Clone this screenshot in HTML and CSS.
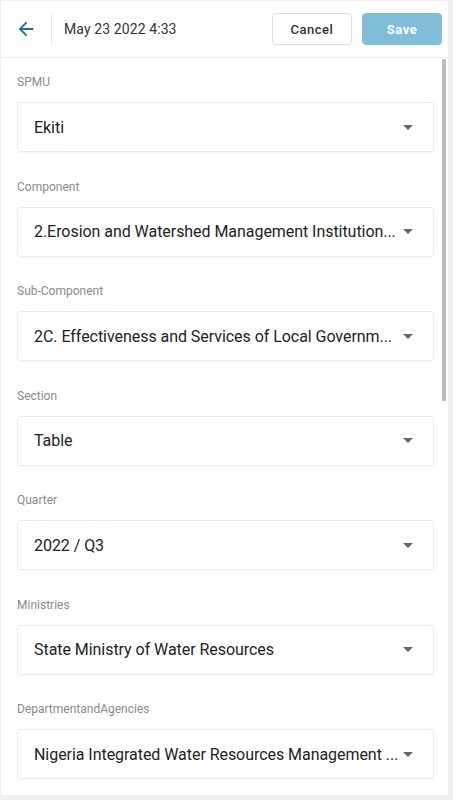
FILE: index.html
```html
<!DOCTYPE html>
<html>
<head>
<meta charset="utf-8">
<link rel="stylesheet" href="styles.css">
</head>
<body>
<div class="app">
  <header class="topbar">
    <div class="back">
      <svg viewBox="0 0 24 24" width="22" height="22"><path d="M20 11H7.83l5.59-5.59L12 4l-8 8 8 8 1.41-1.41L7.83 13H20v-2z" fill="#1d6f8c"/></svg>
    </div>
    <div class="divider"></div>
    <div class="date">May 23 2022 4:33</div>
    <div class="actions">
      <button class="btn btn-cancel">Cancel</button>
      <button class="btn btn-save">Save</button>
    </div>
  </header>
  <main class="content">
    <div class="form">
      <div class="field">
        <div class="label">SPMU</div>
        <div class="select"><span class="value">Ekiti</span><span class="caret"></span></div>
      </div>
      <div class="field">
        <div class="label">Component</div>
        <div class="select"><span class="value">2.Erosion and Watershed Management Institution...</span><span class="caret"></span></div>
      </div>
      <div class="field">
        <div class="label">Sub-Component</div>
        <div class="select"><span class="value">2C. Effectiveness and Services of Local Governm...</span><span class="caret"></span></div>
      </div>
      <div class="field">
        <div class="label">Section</div>
        <div class="select"><span class="value">Table</span><span class="caret"></span></div>
      </div>
      <div class="field">
        <div class="label">Quarter</div>
        <div class="select"><span class="value">2022 / Q3</span><span class="caret"></span></div>
      </div>
      <div class="field">
        <div class="label">Ministries</div>
        <div class="select"><span class="value">State Ministry of Water Resources</span><span class="caret"></span></div>
      </div>
      <div class="field">
        <div class="label">DepartmentandAgencies</div>
        <div class="select"><span class="value">Nigeria Integrated Water Resources Management ...</span><span class="caret"></span></div>
      </div>
    </div>
    <div class="scroll-thumb"></div>
  </main>
</div>
</body>
</html>
```
FILE: styles.css
```css
html, body {
  margin: 0;
  padding: 0;
}
body {
  background: #efefef;
  font-family: Roboto, "Liberation Sans", sans-serif;
  width: 453px;
  height: 800px;
  overflow: hidden;
}
.app {
  margin: 1px 0 0 1px;
  width: 447px;
  height: 794px;
  background: #fff;
  display: flex;
  flex-direction: column;
  overflow: hidden;
}
.topbar {
  height: 56px;
  border-bottom: 1px solid #ececec;
  display: flex;
  align-items: center;
  flex-shrink: 0;
}
.back {
  width: 50px;
  display: flex;
  justify-content: center;
  align-items: center;
}
.back svg { display: block; }
.divider {
  width: 1px;
  height: 31px;
  background: #e6e6e6;
}
.date {
  margin-left: 12px;
  font-size: 14px;
  color: #333;
  font-weight: 400;
  letter-spacing: 0.1px;
}
.actions {
  margin-left: auto;
  display: flex;
  gap: 10px;
  padding-right: 6px;
}
.btn {
  height: 32px;
  border-radius: 4px;
  font-family: Roboto, "Liberation Sans", sans-serif;
  font-size: 13px;
  font-weight: 500;
  letter-spacing: 0.5px;
  cursor: pointer;
}
.btn-cancel {
  width: 80px;
  background: #fff;
  border: 1px solid #dedede;
  color: #333;
}
.btn-save {
  width: 80px;
  background: #7fbddb;
  border: 1px solid #7fbddb;
  color: #fff;
  font-weight: 700;
}
.content {
  position: relative;
  flex: 1;
  overflow: hidden;
}
.form {
  padding: 16px 14px 0 16px;
}
.field {
  display: flex;
  flex-direction: column;
  height: 104.5px;
}
.label {
  font-size: 12px;
  line-height: 16px;
  color: #8a8a8a;
  margin-bottom: 12px;
}
.select {
  height: 48px;
  border: 1px solid #ebebeb;
  border-radius: 3px;
  box-shadow: 0 1px 2px rgba(0,0,0,0.04);
  display: flex;
  align-items: center;
  padding: 0 20px 0 16px;
  gap: 6px;
}
.value {
  flex: 1;
  min-width: 0;
  font-size: 16px;
  color: #222;
  white-space: nowrap;
  overflow: hidden;
  letter-spacing: -0.05px;
}
.caret {
  width: 0;
  height: 0;
  border-left: 5px solid transparent;
  border-right: 5px solid transparent;
  border-top: 5px solid #666;
  flex-shrink: 0;
}
.scroll-thumb {
  position: absolute;
  top: 1px;
  left: 441px;
  width: 4px;
  height: 342px;
  background: #bdbdbd;
  border-radius: 1px;
}
```
